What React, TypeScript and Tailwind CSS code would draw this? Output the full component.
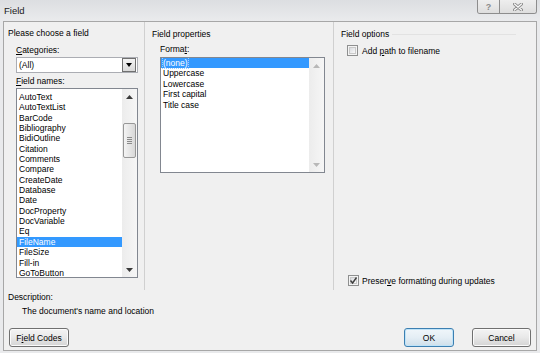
import clsx from 'clsx';

const fieldNames = [
  'AutoText',
  'AutoTextList',
  'BarCode',
  'Bibliography',
  'BidiOutline',
  'Citation',
  'Comments',
  'Compare',
  'CreateDate',
  'Database',
  'Date',
  'DocProperty',
  'DocVariable',
  'Eq',
  'FileName',
  'FileSize',
  'Fill-in',
  'GoToButton',
];

const formats = ['(none)', 'Uppercase', 'Lowercase', 'First capital', 'Title case'];

const Arrow = ({ up, disabled }: { up?: boolean; disabled?: boolean }) => (
  <div className="h-[15px] flex items-center justify-center">
    <svg width="7" height="4" viewBox="0 0 7 4">
      <path
        d={up ? 'M0 4 L3.5 0 L7 4 Z' : 'M0 0 L3.5 4 L7 0 Z'}
        fill={disabled ? '#b8b8b8' : '#3a3a3a'}
      />
    </svg>
  </div>
);

const Scrollbar = ({ offset, thumb, disabled }: { offset?: number; thumb?: number; disabled?: boolean }) => (
  <div className="w-[15px] shrink-0 flex flex-col bg-linear-to-r from-[#ececec] to-[#f6f6f6]">
    <Arrow up disabled={disabled} />
    <div className="flex-1 flex flex-col px-[1px]">
      {thumb && (
        <>
          <div style={{ height: offset }} />
          <div
            className="rounded-[2px] border border-[#979797] bg-linear-to-r from-[#f4f4f4] to-[#d8d8d8] flex flex-col items-center justify-center gap-[1px]"
            style={{ height: thumb }}
          >
            <div className="w-[5px] h-px bg-[#8a8a8a]" />
            <div className="w-[5px] h-px bg-[#8a8a8a]" />
            <div className="w-[5px] h-px bg-[#8a8a8a]" />
            <div className="w-[5px] h-px bg-[#8a8a8a]" />
          </div>
        </>
      )}
    </div>
    <Arrow disabled={disabled} />
  </div>
);

const Checkbox = ({ checked }: { checked?: boolean }) => (
  <span className="w-[11px] h-[11px] shrink-0 border border-[#8e8f8f] bg-[#f4f4f4] flex items-center justify-center">
    <span className="w-[7px] h-[7px] border border-[#c9c9c9] bg-linear-to-br from-[#d9dbdf] to-[#f9f9f9] relative">
      {checked && (
        <svg width="9" height="9" viewBox="0 0 9 9" className="absolute left-[-2px] top-[-2px]">
          <path d="M1.5 4.5 L3.6 7 L7.5 1.5" fill="none" stroke="#3d3d3d" strokeWidth="1.4" />
        </svg>
      )}
    </span>
  </span>
);

const Button = ({ children, className, primary }: { children: React.ReactNode; className: string; primary?: boolean }) => (
  <div
    className={clsx(
      'h-[19px] rounded-[3px] border flex items-center justify-center',
      primary
        ? 'border-[#3c7fb1] bg-linear-to-b from-[#f0f6fa] via-[#e4eef5] to-[#cfdfea] shadow-[inset_0_0_0_1px_#bfe3f8]'
        : 'border-[#707070] bg-linear-to-b from-[#f4f4f4] via-[#e8e8e8] to-[#d4d4d4] shadow-[inset_0_0_0_1px_#fbfbfb]',
      className,
    )}
  >
    {children}
  </div>
);

export default function App() {
  return (
    <div className="w-[540px] h-[353px] flex flex-col bg-[#e9eaec] text-black text-[8.5px] leading-[10px] font-['Liberation_Sans',Arial,sans-serif]">
      {/* title bar */}
      <div className="h-[21px] shrink-0 flex items-start bg-linear-to-b from-[#dcdee1] to-[#eaebed]">
        <div className="pl-[4px] pt-[5px] text-[9.5px] leading-[11px] text-[#1a1a1a]">Field</div>
        <div className="ml-auto mr-[3px] flex h-[14px] border border-t-0 border-[#8d8d8d] rounded-b-[3px] overflow-hidden">
          <div className="w-[22px] flex items-center justify-center border-r border-[#8d8d8d] bg-linear-to-b from-[#eeeeee] to-[#dedede] text-[9px] font-bold text-[#8a8a8a]">
            ?
          </div>
          <div className="w-[36px] flex items-center justify-center bg-linear-to-b from-[#eeeeee] to-[#dedede]">
            <svg width="10" height="8" viewBox="0 0 10 8">
              <path d="M1.5 1 L8.5 7 M8.5 1 L1.5 7" stroke="#8a8a8a" strokeWidth="3" strokeLinecap="round" />
              <path d="M1.5 1 L8.5 7 M8.5 1 L1.5 7" stroke="#fafafa" strokeWidth="1.3" strokeLinecap="round" />
            </svg>
          </div>
        </div>
      </div>

      {/* client area */}
      <div className="flex-1 mx-[3px] mb-[2px] border border-[#a7a7a7] bg-[#f0f0f0] flex flex-col">
        <div className="h-[268px] shrink-0 flex">
          {/* choose a field */}
          <div className="w-[141px] shrink-0 border-r border-[#d0d0d0] flex flex-col pl-[4px] pt-[6px]">
            <div>Please choose a field</div>
            <div className="pl-[8px] flex flex-col">
              <div className="mt-[7px]">
                <span className="underline underline-offset-[1px]">C</span>ategories:
              </div>
              <div className="mt-[2px] w-[122px] h-[16px] border border-[#abadb3] bg-white flex items-center">
                <span className="pl-[2px] flex-1">(All)</span>
                <div className="w-[14px] h-[14px] mr-px border border-[#707070] bg-linear-to-b from-[#f4f4f4] to-[#d9d9d9] flex items-center justify-center">
                  <svg width="6" height="4" viewBox="0 0 6 4">
                    <path d="M0 0 L3 4 L6 0 Z" fill="#000" />
                  </svg>
                </div>
              </div>
              <div className="mt-[3px]">
                <span className="underline underline-offset-[1px]">F</span>ield names:
              </div>
              <div className="mt-[2px] w-[122px] h-[190px] border border-[#828790] bg-white flex">
                <div className="flex-1 pt-[3px] overflow-hidden">
                  {fieldNames.map(name => (
                    <div
                      key={name}
                      className={clsx(
                        'h-[10.35px] leading-[10.35px] pl-[2px] whitespace-nowrap',
                        name === 'FileName' && 'bg-[#3399ff] text-white',
                      )}
                    >
                      {name}
                    </div>
                  ))}
                </div>
                <Scrollbar offset={19} thumb={35} />
              </div>
            </div>
          </div>

          {/* field properties */}
          <div className="w-[189px] shrink-0 border-r border-[#d0d0d0] flex flex-col pl-[7px] pt-[7px]">
            <div>Field properties</div>
            <div className="pl-[8px] flex flex-col">
              <div className="mt-[5px]">
                Forma<span className="underline underline-offset-[1px]">t</span>:
              </div>
              <div className="mt-[3px] w-[165px] h-[116px] border border-[#828790] bg-white flex">
                <div className="flex-1 overflow-hidden">
                  {formats.map(name => (
                    <div
                      key={name}
                      className={clsx(
                        'h-[10.4px] leading-[10.4px] pl-[2px]',
                        name === '(none)' && 'bg-[#3399ff] text-white',
                      )}
                    >
                      <span className={clsx(name === '(none)' && 'outline-1 outline-dotted outline-[#9fd0ff]')}>{name}</span>
                    </div>
                  ))}
                </div>
                <Scrollbar disabled />
              </div>
            </div>
          </div>

          {/* field options */}
          <div className="flex-1 flex flex-col pl-[7px] pt-[7px] pb-[4px]">
            <div className="flex items-center">
              <span>Field options</span>
              <div className="flex-1 h-px bg-[#e2e2e2] ml-[3px] mr-[20px]" />
            </div>
            <div className="mt-[6px] pl-[6px] flex items-center gap-[4px]">
              <Checkbox />
              <span>
                Add <span className="underline underline-offset-[1px]">p</span>ath to filename
              </span>
            </div>
            <div className="mt-auto pl-[7px] flex items-center gap-[3px]">
              <Checkbox checked />
              <span>
                Preser<span className="underline underline-offset-[1px]">v</span>e formatting during updates
              </span>
            </div>
          </div>
        </div>

        {/* description and buttons */}
        <div className="flex-1 flex flex-col pt-[2px] pl-[4px] pr-[5px] pb-[3px]">
          <div>Description:</div>
          <div className="mt-[4px] pl-[14px]">The document's name and location</div>
          <div className="mt-auto flex items-end">
            <Button className="w-[60px] ml-[1px]">
              <span>
                F<span className="underline underline-offset-[1px]">i</span>eld Codes
              </span>
            </Button>
            <Button primary className="w-[50px] ml-auto">
              OK
            </Button>
            <Button className="w-[59px] ml-[18px]">Cancel</Button>
          </div>
        </div>
      </div>
    </div>
  );
}
